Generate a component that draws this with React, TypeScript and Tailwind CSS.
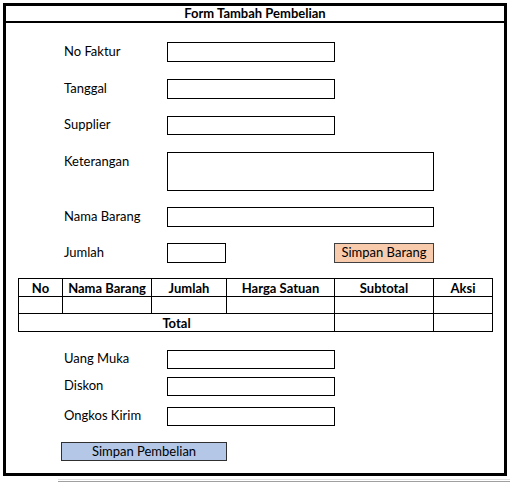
import React from "react";

function Field({ label, w = "w-[168px]", h = "h-[20px]", top = false }: { label: string; w?: string; h?: string; top?: boolean }) {
  return (
    <div className={`flex ${top ? "items-start" : "items-center"}`}>
      <div className="w-[103px] h-[20px] flex items-center">{label}</div>
      <div className={`${w} ${h} border border-black bg-white`} />
    </div>
  );
}

export default function App() {
  return (
    <div className="w-[510px] h-[485px] bg-white overflow-hidden text-[13px] text-black" style={{ fontFamily: "Lato, 'Open Sans', sans-serif" }}>
      <div className="ml-[3px] mt-[3px] w-[504px] h-[473px] border-[3px] border-black flex flex-col">
        {/* header */}
        <div className="h-[17px] border-b-2 border-black flex items-center justify-center font-bold text-[13px]">
          Form Tambah Pembelian
        </div>

        <div className="flex flex-col pl-[58px]">
          <div className="mt-[19px]"><Field label="No Faktur" /></div>
          <div className="mt-[17px]"><Field label="Tanggal" /></div>
          <div className="mt-[16px]"><Field label="Supplier" h="h-[19px]" /></div>
          <div className="mt-[17px]"><Field label="Keterangan" w="w-[267px]" h="h-[39px]" top /></div>
          <div className="mt-[16px]"><Field label="Nama Barang" w="w-[267px]" /></div>
          <div className="mt-[16px] flex items-center">
            <div className="w-[103px] h-[20px] flex items-center">Jumlah</div>
            <div className="w-[59px] h-[20px] border border-black" />
            <button className="ml-[108px] w-[100px] h-[20px] border border-[#404040] bg-[#f8cbad] text-[13px] flex items-center justify-center">
              Simpan Barang
            </button>
          </div>
        </div>

        {/* table */}
        <table className="mt-[15px] ml-[12px] w-[475px] border-collapse table-fixed text-[13px]">
          <colgroup>
            <col className="w-[44px]" />
            <col className="w-[89px]" />
            <col className="w-[75px]" />
            <col className="w-[108px]" />
            <col className="w-[99px]" />
            <col className="w-[59px]" />
          </colgroup>
          <thead>
            <tr className="h-[18px] font-bold">
              <th className="border border-black p-0 leading-[16px]">No</th>
              <th className="border border-black p-0 leading-[16px]">Nama Barang</th>
              <th className="border border-black p-0 leading-[16px]">Jumlah</th>
              <th className="border border-black p-0 leading-[16px]">Harga Satuan</th>
              <th className="border border-black p-0 leading-[16px]">Subtotal</th>
              <th className="border border-black p-0 leading-[16px]">Aksi</th>
            </tr>
          </thead>
          <tbody>
            <tr className="h-[17px]">
              <td className="border border-black p-0" />
              <td className="border border-black p-0" />
              <td className="border border-black p-0" />
              <td className="border border-black p-0" />
              <td className="border border-black p-0" />
              <td className="border border-black p-0" />
            </tr>
            <tr className="h-[18px]">
              <td colSpan={4} className="border border-black p-0 text-center font-bold leading-[16px]">Total</td>
              <td className="border border-black p-0" />
              <td className="border border-black p-0" />
            </tr>
          </tbody>
        </table>

        <div className="flex flex-col pl-[58px]">
          <div className="mt-[17px]"><Field label="Uang Muka" h="h-[19px]" /></div>
          <div className="mt-[7px]"><Field label="Diskon" h="h-[19px]" /></div>
          <div className="mt-[10px]"><Field label="Ongkos Kirim" h="h-[19px]" /></div>
          <button className="mt-[16px] -ml-[3px] w-[166px] h-[19px] border border-[#303030] bg-[#b4c7e7] text-[13px] flex items-center justify-center">
            Simpan Pembelian
          </button>
        </div>
      </div>
      <div className="mt-[3px] ml-[58px] h-px bg-[#e0e0e0]" />
      <div className="mt-[1px] ml-[58px] h-px bg-[#a0a0a0]" />
    </div>
  );
}
